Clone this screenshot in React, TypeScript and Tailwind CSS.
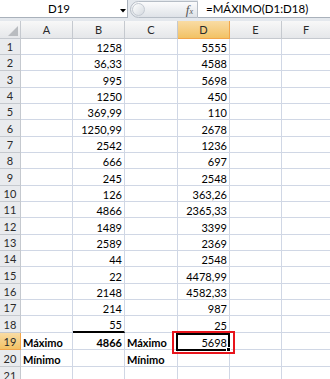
import React from "react";

const B = ["1258","36,33","995","1250","369,99","1250,99","2542","666","245","126","4866","1489","2589","44","22","2148","214","55"];
const D = ["5555","4588","5698","450","110","2678","1236","697","2548","363,26","2365,33","3399","2369","2548","4478,99","4582,33","987","25"];
const H = [16,16,17,16,16,17,16,16,17,16,16,17,16,16,17,16,16,17];

const cols = "grid grid-cols-[21px_52px_52px_53px_52px_52px_1fr]";
const cell = "border-r border-b border-[#d0d7e5] flex items-end pb-[1px] overflow-visible whitespace-nowrap";
const num = cell + " justify-end pr-[2px]";
const txt = cell + " justify-start pl-[2px]";
const rowHdr = "border-r border-b border-[#c5c9cf] bg-[#e9ebee] flex items-center justify-center text-[#2a2a2a]";
const rowHdrSel = "border-r border-b border-[#f2a54a] bg-gradient-to-b from-[#f9dca4] to-[#f2c264] flex items-center justify-center text-[#2a2a2a]";

export default function App() {
  return (
    <div className="w-[330px] h-[379px] overflow-hidden bg-white text-black text-[11px] leading-none" style={{ fontFamily: "Lato, 'Liberation Sans', sans-serif" }}>
      {/* formula bar */}
      <div className="h-[21px] bg-[#e4e8ed] flex items-start">
        <div className="w-[128px] h-[18px] bg-white border-b border-r border-[#a9b1bb] flex items-center relative">
          <span className="w-[118px] text-center text-[11.5px]">D19</span>
          <svg width="6" height="4" viewBox="0 0 6 4" className="absolute left-[120px] top-[9px]">
            <path d="M0 0 H6 L3 3.5 Z" fill="#000" />
          </svg>
        </div>
        <div className="ml-[2px] mt-[1px] w-[68px] h-[17px] rounded-l-full border border-[#b6bdc6] bg-gradient-to-b from-[#fbfbfc] to-[#dfe3e8] flex items-center relative">
          <div className="ml-[1px] w-[13px] h-[13px] rounded-full border border-[#c4cad2] bg-gradient-to-br from-white to-[#d5dae0]" />
          <span className="absolute right-[4px] top-[1px] text-[#555] italic" style={{ fontFamily: "'Liberation Serif', serif" }}>
            <span className="text-[13px]">f</span><span className="text-[8px]">x</span>
          </span>
        </div>
        <div className="flex-1 h-[18px] bg-white border-b border-[#a9b1bb] flex items-center pl-[8px] text-[11.5px]">
          =MÁXIMO(D1:D18)
        </div>
      </div>

      {/* column headers */}
      <div className={cols + " h-[18px] bg-gradient-to-b from-[#f8f8f8] to-[#e4e6e9] text-[#2a2a2a]"}>
        <div className="border-r border-b border-[#c5c9cf] relative">
          <svg width="10" height="10" viewBox="0 0 10 10" className="absolute right-[2px] bottom-[2px]">
            <path d="M10 0 V10 H0 Z" fill="#b9bcc0" />
          </svg>
        </div>
        <div className="border-r border-b border-[#c5c9cf] flex items-center justify-center">A</div>
        <div className="border-r border-b border-[#c5c9cf] flex items-center justify-center">B</div>
        <div className="border-r border-b border-[#c5c9cf] flex items-center justify-center">C</div>
        <div className="border-r border-b border-[#f2a54a] bg-gradient-to-b from-[#f9dca4] to-[#f2c264] flex items-center justify-center">D</div>
        <div className="border-r border-b border-[#c5c9cf] flex items-center justify-center">E</div>
        <div className="border-b border-[#c5c9cf] flex items-center justify-center">F</div>
      </div>

      {B.map((b, i) => (
        <div key={i} className={cols} style={{ height: H[i] }}>
          <div className={rowHdr}>{i + 1}</div>
          <div className={cell} />
          <div className={num + (i === 17 ? " border-b-2 border-b-black" : "")}>{b}</div>
          <div className={cell} />
          <div className={num}>{D[i]}</div>
          <div className={cell} />
          <div className={cell + " border-r-0"} />
        </div>
      ))}

      {/* row 19 */}
      <div className={cols + " h-[17px]"}>
        <div className={rowHdrSel}>19</div>
        <div className={txt + " font-bold"}>Máximo</div>
        <div className={num + " font-bold"}>4866</div>
        <div className={txt + " font-bold"}>Máximo</div>
        <div className={num + " relative"}>
          5698
          <div className="absolute left-[-6px] top-[-2px] right-[-6px] bottom-[-5px] border-[2.5px] border-[#e8141c] z-10 pointer-events-none" />
          <div className="absolute left-[-2px] top-[0px] right-[-1px] bottom-[-2px] border-2 border-black z-10" />
          <div className="absolute right-[-2px] bottom-[-3px] w-[5px] h-[5px] bg-black border border-white z-20" />
        </div>
        <div className={cell} />
        <div className={cell + " border-r-0"} />
      </div>

      {/* row 20 */}
      <div className={cols + " h-[17px]"}>
        <div className={rowHdr}>20</div>
        <div className={txt + " font-bold"}>Mínimo</div>
        <div className={cell} />
        <div className={txt + " font-bold"}>Mínimo</div>
        <div className={cell} />
        <div className={cell} />
        <div className={cell + " border-r-0"} />
      </div>

      {/* row 21 */}
      <div className={cols + " h-[17px]"}>
        <div className={rowHdr}>21</div>
        <div className={cell} />
        <div className={cell} />
        <div className={cell} />
        <div className={cell} />
        <div className={cell} />
        <div className={cell + " border-r-0"} />
      </div>
    </div>
  );
}
